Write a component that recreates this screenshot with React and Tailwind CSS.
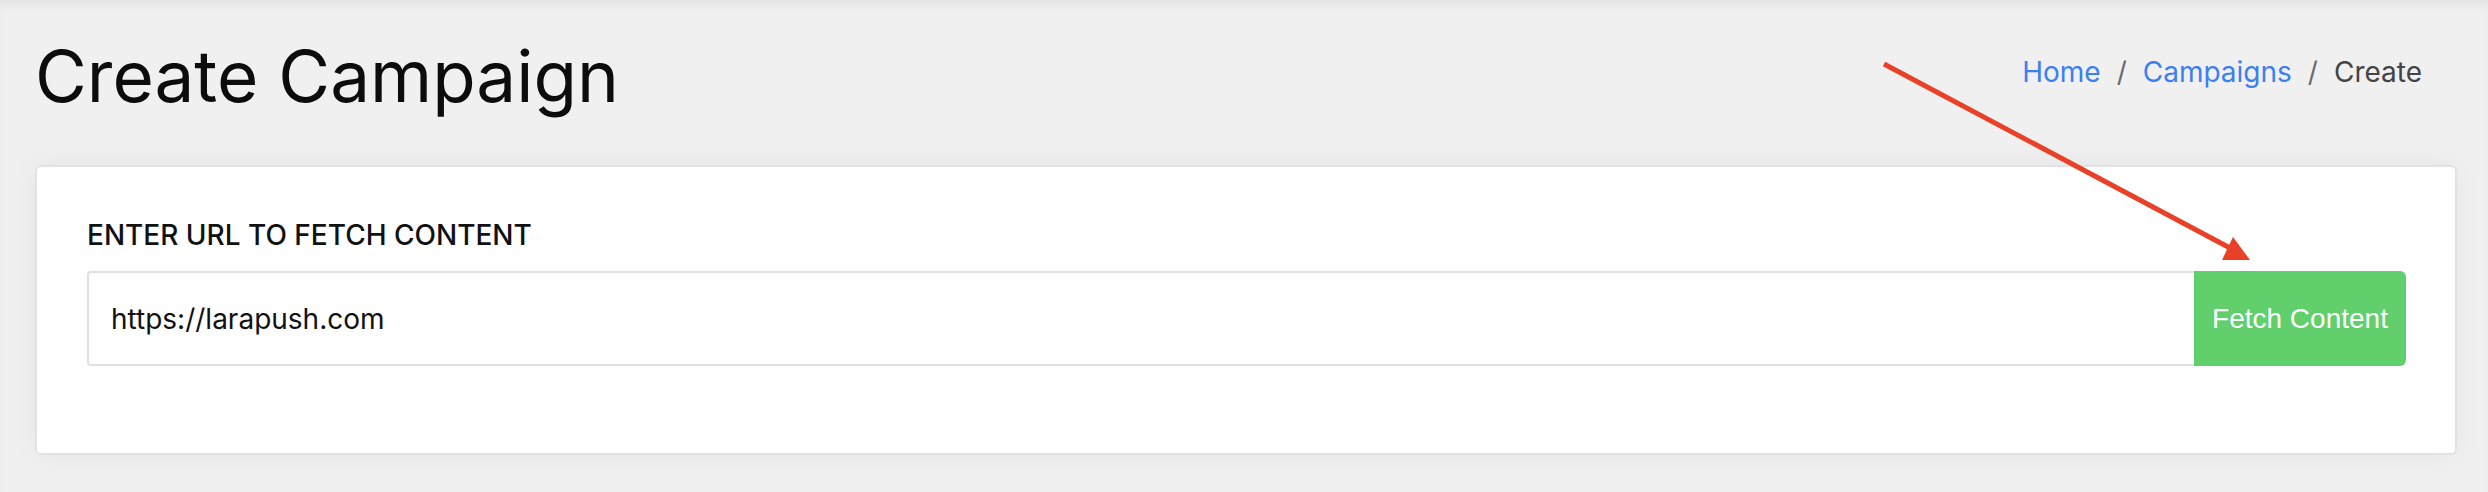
export default function App() {
  return (
    <div className="relative min-h-screen bg-[#f0f0f0] pl-[35px] pr-[31px] pt-[33px] pb-[38px] shadow-[inset_0_10px_14px_-8px_rgba(0,0,0,0.08)] font-['Inter',sans-serif]">
      {/* Header */}
      <div className="flex items-start justify-between">
        <h1 className="text-[71px] leading-[1.23] font-normal text-[#0c0c0c]">Create Campaign</h1>
        <nav className="mt-[23px] mr-[35px] flex items-center gap-[16px] text-[28px] leading-[1.21]">
          <a className="text-[#3b7ff0]">Home</a>
          <span className="text-[#6b6b6b]">/</span>
          <a className="text-[#3b7ff0]">Campaigns</a>
          <span className="text-[#6b6b6b]">/</span>
          <span className="text-[#444]">Create</span>
        </nav>
      </div>

      {/* Card */}
      <div className="mt-[45px] bg-white border-2 border-[#e2e2e2] rounded-[6px] pl-[50px] pr-[49px] pt-[52px] pb-[87px] shadow-[0_0_28px_rgba(0,0,0,0.05)]">
        <label className="block text-[28px] leading-[1.21] font-medium text-[#111]">
          ENTER URL TO FETCH CONTENT
        </label>
        <div className="mt-[18px] flex h-[95px]">
          <input
            type="text"
            defaultValue="https://larapush.com"
            className="flex-1 min-w-0 border-2 border-r-0 border-[#e0e0e0] rounded-l-[4px] px-[22px] text-[28px] text-[#111] font-['Inter',sans-serif] outline-none"
          />
          <button className="w-[212px] bg-[#60cf6c] text-white text-[28px] rounded-r-[6px] font-['Liberation_Sans',Arial,sans-serif]">
            Fetch Content
          </button>
        </div>
      </div>

      {/* Annotation arrow */}
      <svg className="absolute inset-0 pointer-events-none" width="2488" height="492" viewBox="0 0 2488 492">
        <line x1="1884" y1="64" x2="2230" y2="248" stroke="#e84127" strokeWidth="5" />
        <polygon points="2233,237 2222,260 2250,260" fill="#e84127" />
      </svg>
    </div>
  );
}
